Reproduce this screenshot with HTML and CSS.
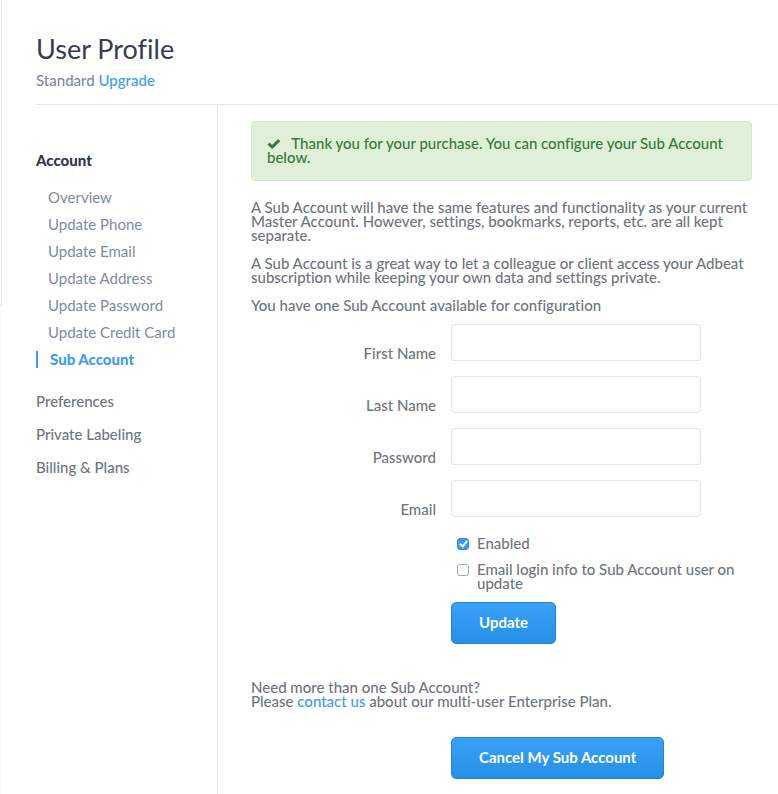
FILE: index.html
```html
<!doctype html>
<html lang="en">
<head>
    <meta charset="UTF-8">
    <meta name="viewport" content="width=device-width, initial-scale=1.0">
    <title>User Profile</title>
    <link rel="stylesheet" href="styles.css">
</head>
<body>
<div class="rail"><div class="rail-panel"></div></div>
<div class="page">
    <header class="header">
        <h1>User Profile</h1>
        <p>Standard <a href="#">Upgrade</a></p>
    </header>
    <div class="columns">
        <nav class="menu">
            <h2>Account</h2>
            <ul class="submenu">
                <li><a href="#">Overview</a></li>
                <li><a href="#">Update Phone</a></li>
                <li><a href="#">Update Email</a></li>
                <li><a href="#">Update Address</a></li>
                <li><a href="#">Update Password</a></li>
                <li><a href="#">Update Credit Card</a></li>
                <li class="current"><a href="#">Sub Account</a></li>
            </ul>
            <ul class="sections">
                <li><a href="#">Preferences</a></li>
                <li><a href="#">Private Labeling</a></li>
                <li><a href="#">Billing &amp; Plans</a></li>
            </ul>
        </nav>
        <main class="content">
            <div class="alert">
                <svg class="tick" width="14" height="10" viewBox="0 0 14 10"><path d="M1.5 4.7 L5.2 8 L12.2 1.2" fill="none" stroke="#3c763d" stroke-width="3"/></svg>
                Thank you for your purchase. You can configure your Sub Account below.
            </div>
            <p>A Sub Account will have the same features and functionality as your current Master Account. However, settings, bookmarks, reports, etc. are all kept separate.</p>
            <p>A Sub Account is a great way to let a colleague or client access your Adbeat subscription while keeping your own data and settings private.</p>
            <p>You have one Sub Account available for configuration</p>
            <form>
                <div class="row">
                    <label for="first">First Name</label>
                    <input type="text" id="first">
                </div>
                <div class="row">
                    <label for="last">Last Name</label>
                    <input type="text" id="last">
                </div>
                <div class="row">
                    <label for="password">Password</label>
                    <input type="password" id="password">
                </div>
                <div class="row">
                    <label for="email">Email</label>
                    <input type="text" id="email">
                </div>
                <div class="indent">
                    <div class="check">
                        <input type="checkbox" id="enabled" checked>
                        <label for="enabled">Enabled</label>
                    </div>
                    <div class="check">
                        <input type="checkbox" id="notify">
                        <label for="notify">Email login info to Sub Account user on update</label>
                    </div>
                    <button type="button">Update</button>
                </div>
            </form>
            <p class="more">Need more than one Sub Account?<br>Please <a href="#">contact us</a> about our multi-user Enterprise Plan.</p>
            <div class="indent">
                <button type="button">Cancel My Sub Account</button>
            </div>
        </main>
    </div>
</div>
</body>
</html>
```
FILE: styles.css
```css
*{
    box-sizing: border-box;
    margin: 0;
    padding: 0;
}
body{
    display: flex;
    min-height: 100vh;
    background: #fff;
    color: #6f757d;
    font: 500 15px/14px Lato, "Liberation Sans", sans-serif;
    font-variant-ligatures: none;
}
a{
    color: #3c9cf7;
    text-decoration: none;
}
ul{
    list-style: none;
}
.rail{
    flex: none;
    width: 2px;
    background: #fafafa;
}
.rail-panel{
    height: 306px;
    background: #fff;
    border-right: 1px solid #e6e6ea;
    border-bottom: 1px solid #e6e6ea;
}
.page{
    flex: 1;
    display: flex;
    flex-direction: column;
    padding-left: 34px;
}
.header{
    padding: 31px 0 14px;
    border-bottom: 1px solid #e5e5ea;
}
.header h1{
    color: #373d51;
    font-size: 27px;
    font-weight: 400;
    line-height: 36px;
}
.header p{
    margin-top: 3px;
    color: #7f8a9b;
    line-height: 20px;
}
.columns{
    flex: 1;
    display: flex;
}
.menu{
    flex: none;
    width: 182px;
    padding-top: 45px;
    border-right: 1px solid #e5e5ea;
}
.menu h2{
    margin-bottom: 14px;
    color: #30364a;
    font-size: 15px;
    font-weight: 900;
    line-height: 20px;
}
.submenu li{
    padding: 5px 0 5px 12px;
    line-height: 17px;
}
.submenu a{
    color: #7f8a9b;
    font-weight: 400;
}
.submenu .current{
    padding-left: 0;
}
.submenu .current a{
    display: block;
    padding-left: 12px;
    border-left: 2px solid #3c9cf7;
    color: #3c9cf7;
    font-weight: 900;
}
.sections{
    margin-top: 12px;
}
.sections li{
    padding: 8px 0;
    line-height: 17px;
}
.sections a{
    color: #6f757d;
}
.content{
    flex: 1;
    padding: 16px 26px 15px 33px;
}
.content p{
    margin-bottom: 14px;
}
.alert{
    margin-bottom: 19px;
    padding: 14px 15px 16px;
    border: 1px solid #d3e8c4;
    border-radius: 4px;
    background: #dff0d8;
    color: #3c763d;
}
.tick{
    margin-right: 7px;
}
.row{
    display: flex;
    gap: 15px;
    margin-bottom: 15px;
}
.row label{
    width: 185px;
    padding-top: 22px;
    text-align: right;
}
.row input{
    width: 250px;
    height: 37px;
    padding: 0 10px;
    border: 1px solid #e5e5ec;
    border-radius: 3px;
    background: #fff;
    font: inherit;
}
form{
    margin-top: -2px;
}
.indent{
    padding-left: 200px;
}
form .indent{
    padding-top: 4px;
}
.check{
    display: flex;
    align-items: flex-start;
    gap: 8px;
    margin: 0 0 12px 6px;
}
.check input{
    flex: none;
    appearance: none;
    width: 12px;
    height: 12px;
    margin-top: 2px;
    border: 1px solid #a9a9a9;
    border-radius: 3px;
    background: #fff;
}
.check input:checked{
    border-color: #3590f4;
    background: #3b99fc;
}
.check input:checked::before{
    content: "";
    display: block;
    width: 3px;
    height: 6px;
    margin: 0 auto;
    border: solid #fff;
    border-width: 0 2px 2px 0;
    transform: rotate(40deg);
}
button{
    display: block;
    height: 42px;
    padding: 0 27px 2px;
    border: 1px solid #2087d8;
    border-radius: 5px;
    background: linear-gradient(#39a1f7, #2590e7);
    color: #fff;
    font: bold 15px/20px Lato, "Liberation Sans", sans-serif;
}
.content .more{
    margin: 36px 0 29px;
}
```
